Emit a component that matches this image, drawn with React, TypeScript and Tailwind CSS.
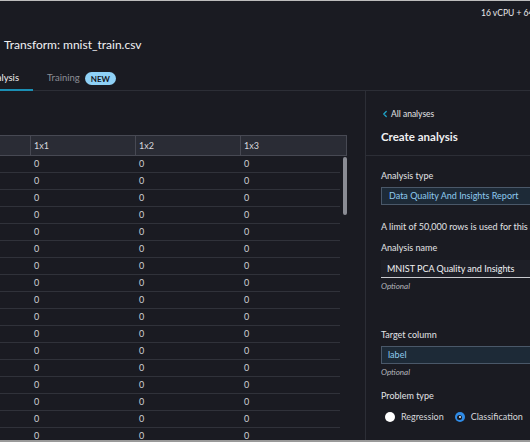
import React from 'react';
import { ChevronLeft } from 'lucide-react';

const columns = ['1x1', '1x2', '1x3'];
const rowCount = 17;

const Radio: React.FC<{ label: string; checked?: boolean }> = ({ label, checked }) => (
  <label className="flex items-center gap-[6px]">
    {checked ? (
      <span className="w-[10px] h-[10px] rounded-full bg-[#2f8be6] flex items-center justify-center">
        <span className="w-[5px] h-[5px] rounded-full bg-[#1a1b22] flex items-center justify-center">
          <span className="w-[2px] h-[2px] rounded-full bg-[#d8ecff]" />
        </span>
      </span>
    ) : (
      <span className="w-[10px] h-[10px] rounded-full bg-white" />
    )}
    <span className="text-[9px] text-[#d6d7db]">{label}</span>
  </label>
);

const App: React.FC = () => {
  return (
    <div
      className="w-[530px] h-[442px] overflow-hidden bg-[#1a1b22] text-white border-t border-b-2 border-t-[#bdbdbd] border-b-[#9a9a9a] flex flex-col"
      style={{ fontFamily: 'Lato, "Open Sans", sans-serif' }}
    >
      {/* Header */}
      <div className="h-[90px] flex flex-col shrink-0">
        <div className="h-[25px] flex items-center pl-[481px] whitespace-nowrap">
          <span className="text-[8.5px] text-[#e8e8ea]">16 vCPU + 64 GiB</span>
        </div>
        <div className="h-[37px] flex items-center pl-[4px]">
          <h1 className="text-[12px] text-[#f2f2f4] whitespace-nowrap">Transform: mnist_train.csv</h1>
        </div>
        <div className="flex items-end h-[28px] border-b border-[#2c2e36]">
          <div className="w-[33px] h-full flex items-center pt-[4px] border-b-2 border-[#1b8fb4] -mb-px">
            <span className="text-[9.5px] text-[#eeeeef] -ml-[15px] whitespace-nowrap">Analysis</span>
          </div>
          <div className="h-full flex items-center pt-[4px] ml-[14px] gap-[5px]">
            <span className="text-[9.5px] text-[#8b8e96]">Training</span>
            <span className="px-[6px] h-[13px] flex items-center rounded-full bg-[#8fd1f6] text-[8px] font-bold text-[#15161c]">
              NEW
            </span>
          </div>
        </div>
      </div>

      {/* Body */}
      <div className="flex flex-1 min-h-0">
        {/* Data table */}
        <div className="w-[366px] shrink-0 border-r border-[#2c2e36] pt-[44px] pr-[18px] relative">
          <div className="flex h-[21px] bg-[#2a2c35] border border-l-0 border-[#474953] text-[9px] text-[#d8d9dd]">
            <div className="w-[31px] shrink-0 border-r border-[#474953]" />
            {columns.map((c, i) => (
              <div
                key={c}
                className={`w-[105px] shrink-0 flex items-center pl-[3px] ${i < 2 ? 'border-r border-[#474953]' : 'flex-1'}`}
              >
                {c}
              </div>
            ))}
          </div>
          <div className="pr-[7px]">
            {Array.from({ length: rowCount }).map((_, r) => (
              <div key={r} className="flex h-[17px] border-b border-[#30323a] text-[9px] text-[#d0d1d5]">
                <div className="w-[31px] shrink-0" />
                {columns.map((c) => (
                  <div key={c} className="w-[105px] flex items-center pl-[3px] shrink-0">
                    0
                  </div>
                ))}
              </div>
            ))}
          </div>
          {/* scrollbar thumb */}
          <div className="absolute left-[343px] top-[66px] w-[4px] h-[58px] rounded-full bg-[#8a8c94]" />
        </div>

        {/* Side panel */}
        <div className="flex-1 flex flex-col whitespace-nowrap">
          <div className="pl-[15px] pt-[17px] pb-[10px] border-b border-[#2c2e36]">
            <div className="h-[12px] flex items-center gap-[1px]">
              <ChevronLeft size={10} strokeWidth={3} className="text-[#1fa4c9] -ml-[1px]" />
              <span className="text-[8.5px] text-[#e4e5e8]">All analyses</span>
            </div>
            <div className="mt-[9px] h-[16px] flex items-center text-[11.5px] font-bold text-[#f0f0f2]">
              Create analysis
            </div>
          </div>

          <div className="pl-[15px] pt-[14px] flex flex-col">
            <div className="h-[12px] flex items-center text-[9px] text-[#e2e3e6]">Analysis type</div>
            <div className="mt-[5px] h-[18px] w-[180px] flex items-center pl-[7px] bg-[#1d2a37] border border-[#4a5869] text-[9px] text-[#8ecbef]">
              Data Quality And Insights Report
            </div>
            <div className="mt-[16px] h-[12px] flex items-center text-[9px] text-[#e2e3e6]">
              A limit of 50,000 rows is used for this analysis.
            </div>
            <div className="mt-[9px] h-[12px] flex items-center text-[9px] text-[#e2e3e6]">Analysis name</div>
            <div className="mt-[6px] h-[18px] w-[180px] flex items-center pl-[6px] bg-[#1e1f27] border-b border-[#c9cacf] text-[9px] text-[#f2f2f4]">
              MNIST PCA Quality and Insights
            </div>
            <div className="mt-[3px] h-[10px] flex items-center text-[8px] italic text-[#b4b6bc]">Optional</div>

            <div className="mt-[38px] h-[12px] flex items-center text-[9px] text-[#e2e3e6]">Target column</div>
            <div className="mt-[5px] h-[18px] w-[180px] flex items-center pl-[6px] bg-[#1d2a37] border border-[#4a5869] text-[9px] text-[#8ecbef]">
              label
            </div>
            <div className="mt-[3px] h-[10px] flex items-center text-[8px] italic text-[#b4b6bc]">Optional</div>

            <div className="mt-[13px] h-[12px] flex items-center text-[9px] text-[#e2e3e6]">Problem type</div>
            <div className="mt-[9px] h-[12px] flex items-center gap-[11px] pl-[4px]">
              <Radio label="Regression" />
              <Radio label="Classification" checked />
            </div>
          </div>
        </div>
      </div>
    </div>
  );
};

export default App;
